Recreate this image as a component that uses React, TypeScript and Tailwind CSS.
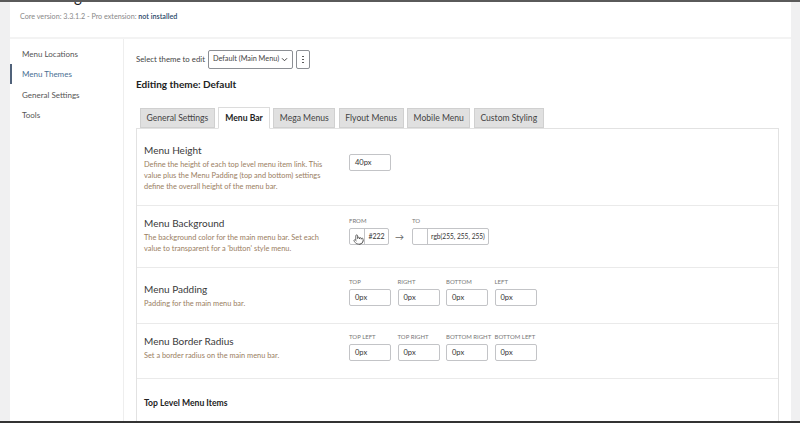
import { Pointer } from "lucide-react";

const tabs = ["General Settings", "Menu Bar", "Mega Menus", "Flyout Menus", "Mobile Menu", "Custom Styling"];
const sideItems = ["Menu Locations", "Menu Themes", "General Settings", "Tools"];

const SmallInput = ({ label, value }: { label: string; value: string }) => (
  <div className="flex flex-col w-[42px]">
    <span className="text-[6px] uppercase text-[#777] leading-none mb-[4px] whitespace-nowrap">{label}</span>
    <div className="h-[17px] border border-[#c3c4c7] rounded-[2px] bg-white text-[7.5px] text-[#333] flex items-center px-[5px]">
      {value}
    </div>
  </div>
);

const Row = ({
  title,
  desc,
  children,
  className,
}: {
  title: string;
  desc: string;
  children: React.ReactNode;
  className: string;
}) => (
  <div className={`flex border-b border-[#eaeaea] ${className}`}>
    <div className="w-[212px] pl-[7px] pr-[25px]">
      <div className="text-[10px] text-[#3a3a3a] leading-[12px]">{title}</div>
      <div className="text-[7.4px] text-[#9a7e62] leading-[11px] mt-[3px]">{desc}</div>
    </div>
    <div>{children}</div>
  </div>
);

export default function App() {
  return (
    <div
      className="w-[800px] h-[423px] overflow-hidden bg-[#f0f0f1] flex flex-col"
      style={{ fontFamily: 'Lato, "Noto Sans", sans-serif' }}
    >
      <div className="h-[2px] bg-[#5a5a5a] shrink-0" />
      <div className="flex flex-1 min-h-0">
        <div className="w-[10px] shrink-0" />
        <div className="w-[781px] bg-white flex flex-col overflow-hidden">
          {/* header */}
          <div className="h-[35px] pl-[10px] relative overflow-hidden">
            <div className="text-[15px] text-[#1d2327] leading-none -mt-[13px] h-[15px]">Max Mega Menu</div>
            <div className="text-[7.2px] text-[#888] mt-[8px]">
              Core version: 3.3.1.2 - Pro extension: <span className="text-[#2c4a6b] font-semibold">not installed</span>
            </div>
          </div>
          <div className="h-[2px] bg-[#f3f3f3]" />
          <div className="flex flex-1 min-h-0">
            {/* sidebar */}
            <div className="w-[114px] border-r border-[#eeeeee] pt-[9px] flex flex-col gap-[8.3px]">
              {sideItems.map((item) => (
                <div
                  key={item}
                  className={`text-[8px] leading-[12px] pl-[10px] border-l-2 ${
                    item === "Menu Themes" ? "border-[#50627a] text-[#4a6f93] py-[4px] -my-[4px]" : "border-transparent text-[#555]"
                  }`}
                >
                  {item}
                </div>
              ))}
            </div>
            {/* main */}
            <div className="flex-1 pl-[12px] pr-[12px] pt-[11px]">
              <div className="flex items-center">
                <span className="text-[7.8px] text-[#444] whitespace-nowrap">Select theme to edit</span>
                <div className="ml-[3px] w-[85px] h-[19px] border border-[#8c8f94] rounded-[2px] text-[7.3px] text-[#444] flex items-center justify-between pl-[4px] pr-[4px] whitespace-nowrap">
                  <span>Default (Main Menu)</span>
                  <svg width="7" height="5" viewBox="0 0 8 6">
                    <path d="M1 1.5 L4 4.5 L7 1.5" fill="none" stroke="#444" strokeWidth="1.2" />
                  </svg>
                </div>
                <div className="ml-[3px] w-[14px] h-[19px] border border-[#8c8f94] rounded-[2px] flex flex-col items-center justify-center gap-[1.5px]">
                  <span className="w-[1.5px] h-[1.5px] bg-[#444] rounded-full" />
                  <span className="w-[1.5px] h-[1.5px] bg-[#444] rounded-full" />
                  <span className="w-[1.5px] h-[1.5px] bg-[#444] rounded-full" />
                </div>
              </div>
              <div className="text-[10px] font-bold text-[#222] mt-[8px]">Editing theme: Default</div>
              {/* tabs */}
              <div className="flex items-end gap-[3.5px] pl-[4px] mt-[14px] h-[22px] relative z-10">
                {tabs.map((t) =>
                  t === "Menu Bar" ? (
                    <div
                      key={t}
                      className="h-[22px] px-[6px] bg-white border border-[#dcdcdc] border-b-white text-[8.6px] font-bold text-[#222] flex items-center -mb-[1px] whitespace-nowrap"
                    >
                      {t}
                    </div>
                  ) : (
                    <div
                      key={t}
                      className="h-[20px] px-[5.5px] bg-[#e0e0e0] border border-[#d0d0d0] text-[8.6px] text-[#444] flex items-center whitespace-nowrap"
                    >
                      {t}
                    </div>
                  )
                )}
              </div>
              {/* content box */}
              <div className="border border-[#e2e2e2] h-[400px]">
                <Row
                  title="Menu Height"
                  desc="Define the height of each top level menu item link. This value plus the Menu Padding (top and bottom) settings define the overall height of the menu bar."
                  className="h-[77px] pt-[15px]"
                >
                  <div className="pt-[10px]">
                    <div className="w-[42px] h-[17px] border border-[#c3c4c7] rounded-[2px] text-[7.5px] text-[#333] flex items-center px-[5px]">
                      40px
                    </div>
                  </div>
                </Row>
                <Row
                  title="Menu Background"
                  desc="The background color for the main menu bar. Set each value to transparent for a 'button' style menu."
                  className="h-[62px] pt-[11px]"
                >
                  <div className="flex items-end gap-[6px] pt-[1px]">
                    <div className="flex flex-col">
                      <span className="text-[6px] text-[#777] leading-none mb-[4px]">FROM</span>
                      <div className="flex h-[17px] border border-[#c3c4c7] rounded-[2px] relative">
                        <div className="w-[15px] border-r border-[#c3c4c7]" />
                        <div className="w-[23px] text-[7px] text-[#333] flex items-center justify-center">#222</div>
                        <Pointer className="absolute left-[3px] top-[5px] w-[11px] h-[11px] text-[#333] fill-white" strokeWidth={1.5} />
                      </div>
                    </div>
                    <span className="text-[9px] text-[#666] h-[17px] flex items-center w-[11px]">→</span>
                    <div className="flex flex-col">
                      <span className="text-[6px] text-[#777] leading-none mb-[4px]">TO</span>
                      <div className="flex h-[17px] border border-[#c3c4c7] rounded-[2px]">
                        <div className="w-[15px] border-r border-[#c3c4c7]" />
                        <div className="w-[60px] text-[6.6px] text-[#333] flex items-center justify-center whitespace-nowrap">rgb(255, 255, 255)</div>
                      </div>
                    </div>
                  </div>
                </Row>
                <Row title="Menu Padding" desc="Padding for the main menu bar." className="h-[56px] pt-[15px]">
                  <div className="flex gap-[6.5px] -mt-[4px]">
                    <SmallInput label="Top" value="0px" />
                    <SmallInput label="Right" value="0px" />
                    <SmallInput label="Bottom" value="0px" />
                    <SmallInput label="Left" value="0px" />
                  </div>
                </Row>
                <Row title="Menu Border Radius" desc="Set a border radius on the main menu bar." className="h-[55px] pt-[11px]">
                  <div className="flex gap-[6.5px] -mt-[1px]">
                    <SmallInput label="Top Left" value="0px" />
                    <SmallInput label="Top Right" value="0px" />
                    <SmallInput label="Bottom Right" value="0px" />
                    <SmallInput label="Bottom Left" value="0px" />
                  </div>
                </Row>
                <div className="pl-[7px] pt-[18px] text-[8.6px] font-bold text-[#222]">Top Level Menu Items</div>
              </div>
            </div>
          </div>
        </div>
        <div className="flex-1 bg-[#f0f0f1]" />
      </div>
      <div className="h-[2px] bg-[#333] shrink-0" />
    </div>
  );
}
